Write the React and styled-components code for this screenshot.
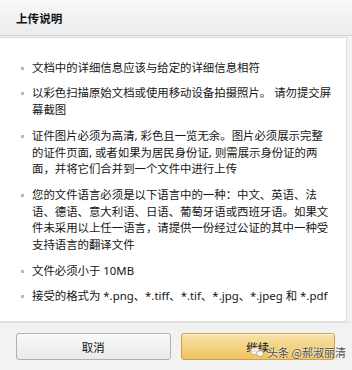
import React from "react";
import styled, { createGlobalStyle } from "styled-components";

const Global = createGlobalStyle`
  html, body { margin: 0; padding: 0; background: #f2f2f2; }
  body { font-family: "Noto Sans", "Noto Sans CJK SC", sans-serif; }
`;

const Dialog = styled.div`
  width: 352px;
  height: 370px;
  display: flex;
  flex-direction: column;
  background: #f2f2f2;
  position: relative;
  overflow: hidden;
`;

const Header = styled.div`
  height: 35px;
  flex: none;
  display: flex;
  align-items: center;
  padding-left: 16px;
  background: linear-gradient(#f8f8f8, #ececec);
  border-bottom: 1px solid #d4d4d4;
  font-family: "Noto Sans CJK SC", sans-serif;
  font-weight: 700;
  font-size: 11.6px;
  color: #111;
`;

const Body = styled.div`
  flex: none;
  height: 285px;
  margin: 1px 5px 0 0;
  background: #fff;
  border: 1px solid #dcdcdc;
  border-left: none;
  padding: 22px 12px 0 21px;
  box-sizing: border-box;
`;

const List = styled.ul`
  list-style: none;
  margin: 0;
  padding: 0;
`;

const Item = styled.li`
  position: relative;
  padding-left: 11px;
  margin-bottom: 8.7px;
  font-size: 11.4px;
  line-height: 16.8px;
  color: #151515;
  font-family: "Noto Sans", "Noto Sans CJK SC", sans-serif;
  &::before {
    content: "";
    position: absolute;
    left: 0;
    top: 7px;
    width: 3px;
    height: 3px;
    background: #b8b8b8;
  }
`;

const Footer = styled.div`
  flex: 1;
  display: flex;
  gap: 10px;
  padding: 10px 17px 0 16px;
  border-top: 1px solid #e4e4e4;
`;

const Button = styled.button`
  flex: 1;
  height: 27px;
  border-radius: 3px;
  font-family: "Noto Sans CJK SC", sans-serif;
  font-size: 11.4px;
  color: #111;
  cursor: pointer;
  border: 1px solid ${(p) => (p.$primary ? "#c8a24f" : "#adb1b8")};
  background: ${(p) =>
    p.$primary
      ? "linear-gradient(#f8e3ad, #eec35b)"
      : "linear-gradient(#f9f9fa, #e9eaec)"};
  box-shadow: inset 0 1px 0 rgba(255,255,255,0.6);
`;

const Watermark = styled.div`
  position: absolute;
  right: 6px;
  bottom: 10px;
  display: flex;
  align-items: center;
  gap: 3px;
  font-family: "Noto Sans CJK SC", sans-serif;
  font-size: 11px;
  color: #333;
  text-shadow: 0 0 2px #fff, 0 0 2px #fff;
  opacity: 0.85;
`;

const items = [
  "文档中的详细信息应该与给定的详细信息相符",
  "以彩色扫描原始文档或使用移动设备拍摄照片。 请勿提交屏幕截图",
  "证件图片必须为高清, 彩色且一览无余。图片必须展示完整的证件页面, 或者如果为居民身份证, 则需展示身份证的两面，并将它们合并到一个文件中进行上传",
  "您的文件语言必须是以下语言中的一种：中文、英语、法语、德语、意大利语、日语、葡萄牙语或西班牙语。如果文件未采用以上任一语言，请提供一份经过公证的其中一种受支持语言的翻译文件",
  "文件必须小于 10MB",
  "接受的格式为 *.png、*.tiff、*.tif、*.jpg、*.jpeg 和 *.pdf",
];

export default function App() {
  return (
    <>
      <Global />
      <Dialog>
        <Header>上传说明</Header>
        <Body>
          <List>
            {items.map((t) => (
              <Item key={t}>{t}</Item>
            ))}
          </List>
        </Body>
        <Footer>
          <Button>取消</Button>
          <Button $primary>继续</Button>
        </Footer>
        <Watermark>
          <svg width="14" height="12" viewBox="0 0 14 12">
            <ellipse cx="5" cy="5" rx="4.5" ry="3.8" fill="#fff" stroke="#999" strokeWidth="0.8" />
            <ellipse cx="10" cy="7.5" rx="3.5" ry="3" fill="#fff" stroke="#999" strokeWidth="0.8" />
          </svg>
          <span>头条 @郝淑丽清</span>
        </Watermark>
      </Dialog>
    </>
  );
}
